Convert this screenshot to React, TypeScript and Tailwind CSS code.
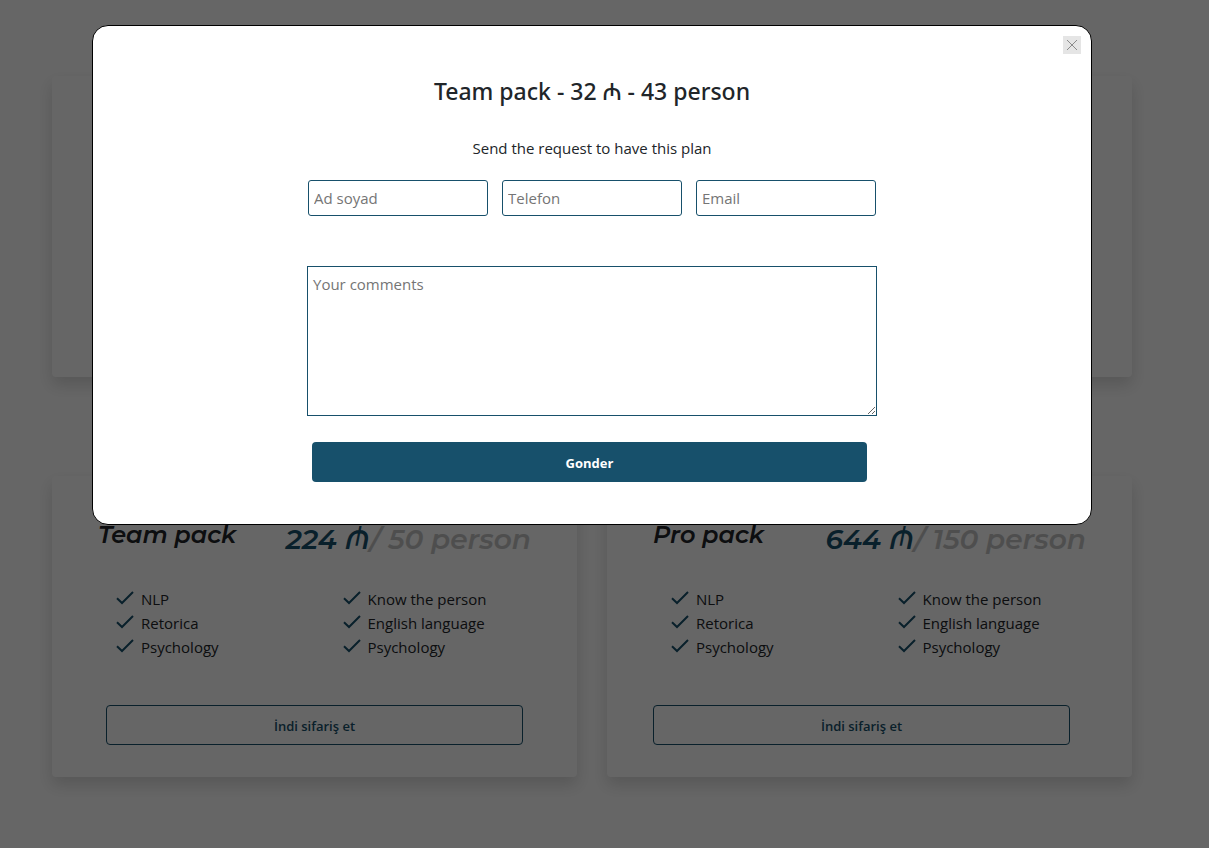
type Plan = {
  name: string;
  price: string;
  people: string;
  buttonAlign: string;
};

const plans: Plan[] = [
  { name: "Team pack", price: "224 ₼", people: "/ 50 person", buttonAlign: "self-center" },
  { name: "Pro pack", price: "644 ₼", people: "/ 150 person", buttonAlign: "self-start" },
];

const features = [
  ["NLP", "Retorica", "Psychology"],
  ["Know the person", "English language", "Psychology"],
];

const cardClass =
  "flex min-h-[301px] flex-col rounded bg-white shadow-[0_8px_16px_rgba(0,0,0,0.15)]";

const fieldClass =
  "h-9 w-full rounded-[3px] border border-[#17506b] bg-white px-[5px] text-[15px] text-[#212529] outline-none placeholder:text-[#757575]";

function Check() {
  return (
    <svg className="h-[18px] w-[18px] shrink-0" viewBox="0 0 18 18" fill="none" aria-hidden="true">
      <path d="M1 8.2 6 13 17 2" stroke="#17506b" strokeWidth="2" />
    </svg>
  );
}

function PlanCard({ plan }: { plan: Plan }) {
  return (
    <article className={`${cardClass} px-[46px] pt-[43px] pb-8`}>
      <div className="flex h-10 items-start justify-between font-[Montserrat,Inter,sans-serif] whitespace-nowrap italic">
        <h2 className="text-2xl leading-8 font-semibold text-[#212529]">{plan.name}</h2>
        <p className="pt-0.5 text-[28px] leading-9 font-semibold text-[#17506b]">
          {plan.price}
          <span className="text-[#c4c4c4]">{plan.people}</span>
        </p>
      </div>
      <div className="mt-7 grid grid-cols-2 gap-x-[38px] pl-[18px]">
        {features.map((column, i) => (
          <ul key={i}>
            {column.map((item) => (
              <li key={item} className="flex h-6 items-center gap-[7px] text-[15px] whitespace-nowrap">
                <Check />
                {item}
              </li>
            ))}
          </ul>
        ))}
      </div>
      <button
        type="button"
        className={`mt-auto h-10 w-full max-w-[417px] rounded border border-[#17506b] pt-1 text-[13px] font-semibold text-[#17506b] ${plan.buttonAlign}`}
      >
        İndi sifariş et
      </button>
    </article>
  );
}

function RequestDialog() {
  return (
    <div className="fixed inset-0 flex items-start justify-center bg-black/60 pt-[25px] pr-[25px]">
      <section
        role="dialog"
        aria-modal="true"
        aria-labelledby="dialog-title"
        className="w-full max-w-[1000px] rounded-2xl border border-black bg-white px-2.5 pt-2.5 pb-[42px]"
      >
        <div className="flex justify-end">
          <button
            type="button"
            aria-label="Close"
            className="flex h-[18px] w-[18px] items-center justify-center bg-[#e5e5e5]"
          >
            <svg className="h-3 w-3" viewBox="0 0 12 12" aria-hidden="true">
              <path d="M1 1 11 11M11 1 1 11" stroke="#8a8a8a" strokeWidth="1" />
            </svg>
          </button>
        </div>
        <h1
          id="dialog-title"
          className="mt-[21px] text-center font-['Noto_Sans',sans-serif] text-[23px] leading-8 font-medium"
        >
          Team pack - 32 ₼ - 43 person
        </h1>
        <p className="mt-[29px] text-center text-[15px] leading-6">Send the request to have this plan</p>
        <form className="mx-auto mt-5 flex w-full max-w-[570px] flex-col">
          <div className="grid grid-cols-3 gap-3.5 px-px">
            <input className={fieldClass} type="text" placeholder="Ad soyad" aria-label="Ad soyad" />
            <input className={fieldClass} type="tel" placeholder="Telefon" aria-label="Telefon" />
            <input className={fieldClass} type="email" placeholder="Email" aria-label="Email" />
          </div>
          <textarea
            className="mt-[50px] h-[150px] w-full resize border border-[#17506b] bg-white p-[5px] text-[15px] leading-6 outline-none placeholder:text-[#757575]"
            placeholder="Your comments"
            aria-label="Your comments"
          />
          <button
            type="submit"
            className="mt-[26px] mr-2.5 ml-[5px] h-10 rounded bg-[#17506b] pt-[3px] text-[13px] font-bold text-white"
          >
            Gonder
          </button>
        </form>
      </section>
    </div>
  );
}

export default function App() {
  return (
    <div className="min-h-screen bg-white font-['Segoe_UI','Open_Sans',sans-serif] text-[#212529]">
      <main className="pt-[76px] pr-[77px] pb-[71px] pl-[52px]">
        <div className="mx-auto grid max-w-[1080px] grid-cols-2 gap-x-[30px] gap-y-[99px]">
          <div className={cardClass} />
          <div className={cardClass} />
          {plans.map((plan) => (
            <PlanCard key={plan.name} plan={plan} />
          ))}
        </div>
      </main>
      <RequestDialog />
    </div>
  );
}
